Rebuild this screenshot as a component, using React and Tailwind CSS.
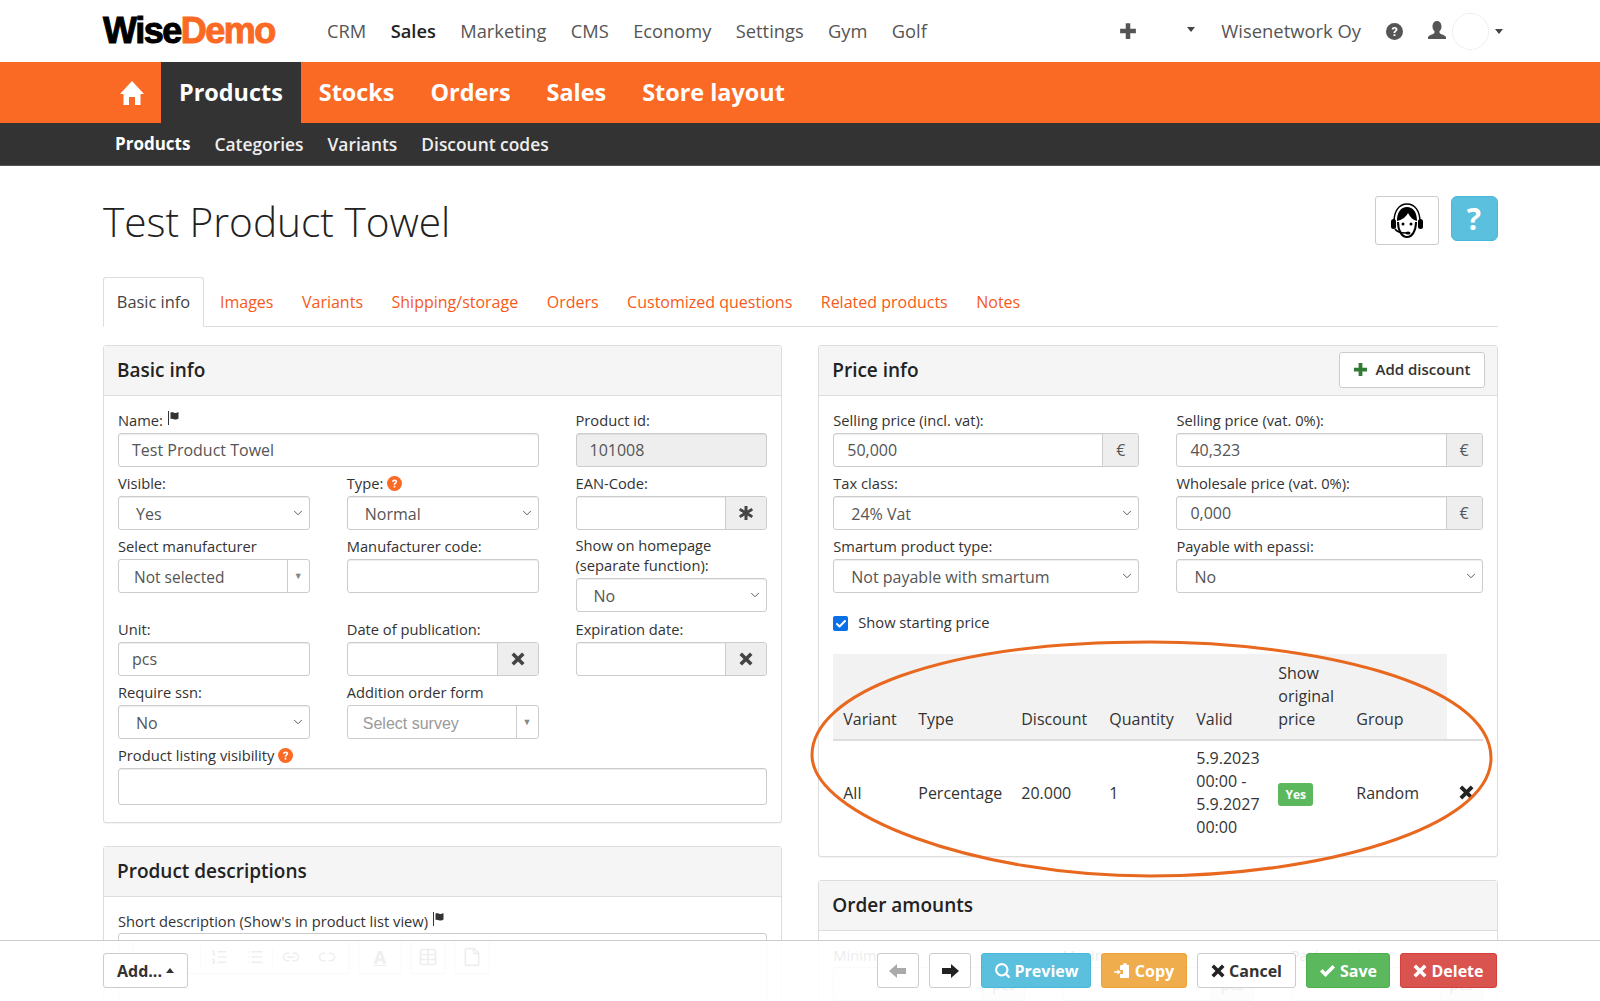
import { ChevronDown, Check, Search, ListOrdered, List, Link2, Unlink2, Table, File } from 'lucide-react';

const OPEN_SANS = "font-['Open_Sans',sans-serif]";

function Cross({ size = 14, className = 'text-[#444]' }) {
  return (
    <svg width={size} height={size} viewBox="0 0 14 14" className={className}>
      <path d="M3 .5 7 4.500 11 .5 13.500 3l-4 4 4 4-2.500 2.500-4-4-4 4L.5 11l4-4-4-4z" fill="currentColor" />
    </svg>
  );
}

function Plus({ size = 16, className = '' }) {
  return (
    <svg width={size} height={size} viewBox="0 0 16 16" className={className}>
      <path d="M6 1h4v5h5v4h-5v5H6v-5H1V6h5z" fill="currentColor" />
    </svg>
  );
}

function Help({ className = 'text-[#fb6a25]', size = 15 }) {
  return (
    <svg width={size} height={size} viewBox="0 0 14 14" className={className}>
      <circle cx="7" cy="7" r="7" fill="currentColor" />
      <path d="M4.600 5.200C4.800 3.900 5.800 3.200 7.100 3.200c1.400 0 2.400.8 2.400 2 0 1-.6 1.500-1.300 2-.4.3-.5.5-.5 1H6.200c0-1 .3-1.400 1-1.900.5-.3.7-.6.7-1 0-.4-.3-.7-.8-.7s-.8.3-.9.9zM6.200 9.200h1.600v1.600H6.200z" fill="#fff" />
    </svg>
  );
}

function Flag() {
  return (
    <svg width="14" height="14" viewBox="0 0 14 14" className="inline-block text-[#333] align-[1px]">
      <path d="M1 0h1v14H1z" fill="currentColor" />
      <path d="M3.500 1.500c2-1 3.500.6 5.500.4 1-.1 2-.5 2.500-.9v6.500c-.8.7-1.700 1-2.700 1-2 0-3.300-1.400-5.300-.5z" fill="currentColor" />
    </svg>
  );
}

function Field({ label, children, className = '' }) {
  return (
    <div className={className}>
      <div className="text-[14.7px] leading-[19px] text-[#333] mb-[3px] whitespace-nowrap">{label}</div>
      {children}
    </div>
  );
}

function Input({ value, disabled, h = 'h-[34px]' }) {
  return (
    <div className={`${h} rounded-[3px] border border-[#ccc] shadow-[inset_0_1px_1px_rgba(0,0,0,0.075)] px-[13px] text-[16px] leading-[32px] text-[#555] ${disabled ? 'bg-[#eee]' : 'bg-white'}`}>
      {value}
    </div>
  );
}

function Select({ value }) {
  return (
    <div className="h-[34px] rounded-[3px] border border-[#ccc] shadow-[inset_0_1px_1px_rgba(0,0,0,0.075)] bg-white pl-[17px] pr-[4px] flex items-center justify-between text-[16px] text-[#555]">
      <span className="pt-[1px]">{value}</span>
      <ChevronDown size={14} strokeWidth={1.5} className="text-[#444]" />
    </div>
  );
}

function Combo({ value, muted }) {
  return (
    <div className="h-[34px] rounded-[3px] border border-[#ccc] bg-white flex items-center">
      <span className={muted ? "flex-1 pl-[15px] pt-[3px] text-[16px] text-[#999] font-['Liberation_Sans',sans-serif]" : 'flex-1 pl-[15px] pt-[4px] text-[15.5px] text-[#555]'}>
        {value}
      </span>
      <span className="w-[22px] h-full border-l border-[#ccc] flex items-center justify-center text-[9px] text-[#888]">▼</span>
    </div>
  );
}

function Addon({ value, children, w = 'w-[41px]' }) {
  return (
    <div className="h-[34px] flex rounded-[3px] border border-[#ccc] shadow-[inset_0_1px_1px_rgba(0,0,0,0.075)] bg-white overflow-hidden">
      <div className="flex-1 px-[13px] text-[16px] leading-[32px] text-[#555]">{value}</div>
      <div className={`${w} bg-[#eee] border-l border-[#ccc] flex items-center justify-center text-[#555] text-[16px]`}>{children}</div>
    </div>
  );
}

function Panel({ title, action, children }) {
  return (
    <section className="border border-[#ddd] rounded-[3px] shadow-[0_1px_1px_rgba(0,0,0,0.05)] bg-white">
      <div className="h-[50px] bg-[#f5f5f5] border-b border-[#ddd] px-[13px] flex items-center justify-between">
        <h3 className="text-[19px] font-semibold text-[#222]">{title}</h3>
        {action}
      </div>
      {children}
    </section>
  );
}

function BasicInfo() {
  return (
    <Panel title="Basic info">
      <div className="px-[14px] pt-[15px] h-[426px]">
        <div className="grid grid-cols-3 gap-x-[37px]">
          <div className="col-span-2">
            <Field label={<>Name: <Flag /></>}><Input value="Test Product Towel" /></Field>
          </div>
          <Field label="Product id:"><Input value="101008" disabled /></Field>
        </div>
        <div className="grid grid-cols-3 gap-x-[37px] mt-[7px]">
          <Field label="Visible:"><Select value="Yes" /></Field>
          <Field label={<span className="flex items-center gap-[4px]">Type: <Help /></span>}><Select value="Normal" /></Field>
          <Field label="EAN-Code:">
            <Addon>
              <svg width="14" height="14" viewBox="0 0 14 14">
                <path d="M6 0h2v5.200l4.500-2.600 1 1.700L9 7l4.500 2.700-1 1.700L8 8.800V14H6V8.800l-4.500 2.600-1-1.700L5 7 .5 4.300l1-1.700L6 5.200z" fill="#444" stroke="#444" />
              </svg>
            </Addon>
          </Field>
        </div>
        <div className="grid grid-cols-3 gap-x-[37px] mt-[7px] h-[76px]">
          <Field label="Select manufacturer"><Combo value="Not selected" /></Field>
          <Field label="Manufacturer code:"><Input /></Field>
          <div className="-mt-[2px]">
            <div className="text-[14.7px] leading-[20px] text-[#333] mb-[3px]">Show on homepage<br />(separate function):</div>
            <Select value="No" />
          </div>
        </div>
        <div className="grid grid-cols-3 gap-x-[37px] mt-[7px]">
          <Field label="Unit:"><Input value="pcs" /></Field>
          <Field label="Date of publication:"><Addon><Cross /></Addon></Field>
          <Field label="Expiration date:"><Addon><Cross /></Addon></Field>
        </div>
        <div className="grid grid-cols-3 gap-x-[37px] mt-[7px]">
          <Field label="Require ssn:"><Select value="No" /></Field>
          <Field label="Addition order form"><Combo value="Select survey" muted /></Field>
        </div>
        <Field className="mt-[7px]" label={<span className="flex items-center gap-[4px]">Product listing visibility <Help /></span>}>
          <Input h="h-[37px]" />
        </Field>
      </div>
    </Panel>
  );
}

function Toolbar() {
  const cell = 'w-[36px] flex items-center justify-center';
  return (
    <div className="flex gap-[8px] h-[34px] mt-[6px] ml-[13px] text-[#555]">
      <div className="w-[218px] border border-[#ccc] rounded-[3px] flex items-center text-[15px] font-bold">
        <span className="w-[34px] text-center">B</span>
        <span className="w-[34px] text-center italic border-r border-[#ccc]">I</span>
        <span className={cell}><ListOrdered size={18} /></span>
        <span className={`${cell} border-r border-[#ccc]`}><List size={18} /></span>
        <span className={cell}><Link2 size={18} /></span>
        <span className={cell}><Unlink2 size={18} /></span>
      </div>
      <div className="w-[44px] border border-[#ccc] rounded-[3px] flex items-center justify-center font-bold text-[18px] underline">A</div>
      <div className="w-[36px] border border-[#ccc] rounded-[3px] flex items-center justify-center"><Table size={20} /></div>
      <div className="w-[36px] border border-[#ccc] rounded-[3px] flex items-center justify-center"><File size={20} /></div>
    </div>
  );
}

function PriceInfo() {
  const head = 'px-[10px] py-[8px] align-bottom text-left font-medium text-[#333] bg-[#f2f2f2]';
  const cell = 'px-[10px] py-[6px]';
  return (
    <Panel
      title="Price info"
      action={
        <button className="h-[36px] w-[146px] -mr-[1px] -mt-[2px] bg-white border border-[#ccc] rounded-[3px] flex items-center justify-center gap-[8px] text-[15px] font-semibold text-[#333]">
          <Plus size={15} className="text-[#2f7a35]" />
          Add discount
        </button>
      }
    >
      <div className="px-[14px] pt-[15px] h-[460px]">
        <div className="grid grid-cols-2 gap-x-[37px] gap-y-[7px]">
          <Field label="Selling price (incl. vat):"><Addon value="50,000" w="w-[36px]">€</Addon></Field>
          <Field label="Selling price (vat. 0%):"><Addon value="40,323" w="w-[36px]">€</Addon></Field>
          <Field label="Tax class:"><Select value="24% Vat" /></Field>
          <Field label="Wholesale price (vat. 0%):"><Addon value="0,000" w="w-[36px]">€</Addon></Field>
          <Field label="Smartum product type:"><Select value="Not payable with smartum" /></Field>
          <Field label="Payable with epassi:"><Select value="No" /></Field>
        </div>
        <label className="flex items-center gap-[10px] mt-[19px] text-[14.7px] text-[#333] leading-[20px]">
          <span className="w-[15px] h-[15px] rounded-[2px] bg-[#0b6fe8] flex items-center justify-center mt-[3px]">
            <Check size={12} strokeWidth={4} className="text-white" />
          </span>
          Show starting price
        </label>
        <table className="mt-[22px] w-[650px] table-fixed text-[16px] leading-[23px] border-collapse">
          <thead>
            <tr className="border-b-2 border-[#ddd]">
              <th className={`${head} w-[75px]`}>Variant</th>
              <th className={`${head} w-[103px]`}>Type</th>
              <th className={`${head} w-[88px]`}>Discount</th>
              <th className={`${head} w-[87px]`}>Quantity</th>
              <th className={`${head} w-[82px]`}>Valid</th>
              <th className={`${head} w-[78px]`}>Show original price</th>
              <th className={`${head} w-[101px]`}>Group</th>
              <th></th>
            </tr>
          </thead>
          <tbody>
            <tr className="text-[#333]">
              <td className={cell}>All</td>
              <td className={cell}>Percentage</td>
              <td className={cell}>20.000</td>
              <td className={cell}>1</td>
              <td className={cell}>5.9.2023 00:00 - 5.9.2027 00:00</td>
              <td className={cell}>
                <span className="block w-[35px] h-[23px] mt-[2px] rounded-[3px] bg-[#5cb85c] text-white text-[12px] font-bold text-center leading-[23px]">Yes</span>
              </td>
              <td className={cell}>Random</td>
              <td className="pl-[12px]"><Cross size={15} className="text-[#222] -mt-[2px]" /></td>
            </tr>
          </tbody>
        </table>
      </div>
    </Panel>
  );
}

function OrderAmounts() {
  return (
    <Panel title="Order amounts">
      <div className="px-[14px] pt-[14px] grid grid-cols-3 gap-x-[37px] text-[14.7px] text-[#333]">
        {['Minimum:', 'Maximum:', 'Package size:'].map((label) => (
          <div key={label}>
            <div className="leading-[20px] mb-[2px]">{label}</div>
            <div className="h-[34px] border border-[#ccc] rounded-[3px] flex justify-end">
              <span className="w-[42px] bg-[#eee] border-l border-[#ccc] text-center leading-[32px]">pcs</span>
            </div>
          </div>
        ))}
      </div>
    </Panel>
  );
}

function ActionButton({ className, children }) {
  return (
    <button className={`h-[35px] rounded-[3px] border flex items-center justify-center gap-[4px] text-[16px] font-bold ${className}`}>
      {children}
    </button>
  );
}

export default function App() {
  const mainNav = ['CRM', 'Sales', 'Marketing', 'CMS', 'Economy', 'Settings', 'Gym', 'Golf'];
  const tabs = ['Images', 'Variants', 'Shipping/storage', 'Orders', 'Customized questions', 'Related products', 'Notes'];

  return (
    <div className={`relative h-[1001px] overflow-hidden bg-white ${OPEN_SANS}`}>
      {/* Top bar */}
      <header className="h-[62px] px-[103px] flex items-center">
        <div className="w-[224px] text-[36px] leading-none tracking-[-1.5px] font-['Liberation_Sans',sans-serif] font-bold [-webkit-text-stroke:1px_currentColor]">
          <span className="text-black">Wise</span><span className="text-[#fb6a25]">Demo</span>
        </div>
        <nav className="flex gap-[24.4px] text-[18.3px] text-[#555]">
          {mainNav.map((item) => (
            <a key={item} className={item === 'Sales' ? 'text-[#222] font-semibold' : ''}>{item}</a>
          ))}
        </nav>
        <div className="ml-auto -mr-[6px] flex items-center text-[#555]">
          <Plus size={18} />
          <span className="ml-[50px] w-0 h-0 border-x-[4px] border-x-transparent border-t-[5px] border-t-[#444] -mt-[4px]" />
          <span className="ml-[26px] text-[18.4px]">Wisenetwork Oy</span>
          <Help className="text-[#555] ml-[25px]" size={17} />
          <svg width="20" height="20" viewBox="0 0 20 20" className="ml-[24px] text-[#555]">
            <path d="M10 0c3 0 4.500 2.500 4.500 5.500 0 2-.8 3.500-2 4.800-.3 1.500.3 2.300 2 3 2 .8 4 1.500 4.500 2.700v2H1v-2c.5-1.200 2.500-1.900 4.500-2.700 1.700-.7 2.300-1.500 2-3-1.200-1.300-2-2.800-2-4.800C5.500 2.500 7 0 10 0z" fill="currentColor" />
          </svg>
          <span className="ml-[5px] w-[37px] h-[37px] rounded-full border border-dotted border-[#ddd]" />
          <span className="ml-[6px] w-0 h-0 border-x-[4px] border-x-transparent border-t-[5px] border-t-[#444]" />
        </div>
      </header>

      {/* Orange nav */}
      <div className="h-[61px] bg-[#fb6a25] pl-[103px] flex text-white text-[23.4px] font-bold">
        <div className="w-[58px] flex items-center justify-center">
          <svg width="26" height="26" viewBox="0 0 26 26">
            <path d="M13 1 25 14h-3.500v11h-5.500v-8h-6v8H4.500V14H1z" fill="#fff" />
          </svg>
        </div>
        <div className="px-[18px] bg-[#333] flex items-center">Products</div>
        {['Stocks', 'Orders', 'Sales', 'Store layout'].map((item) => (
          <div key={item} className="px-[18px] flex items-center">{item}</div>
        ))}
      </div>

      {/* Sub nav */}
      <div className="h-[43px] bg-[#333] border-b border-[#555] pl-[115px] flex items-center gap-[24px] text-[#eee] text-[17.4px] font-semibold">
        <a className="text-white font-bold text-[17px]">Products</a>
        <a>Categories</a>
        <a>Variants</a>
        <a>Discount codes</a>
      </div>

      <main className="pl-[103px] pr-[102.5px]">
        <div className="h-[111px] flex justify-between">
          <h1 className="mt-[26px] text-[40.6px] leading-[60px] font-light text-[#222]">Test Product Towel</h1>
          <div className="flex gap-[12px] mt-[30px] items-start">
            <div className="w-[64px] h-[49px] border border-[#ccc] rounded-[3px] flex items-center justify-center">
              <svg width="38" height="38" viewBox="0 0 38 38">
                <path d="M6 20C6 9 11 2 19 2s13 7 13 18" fill="none" stroke="#000" strokeWidth="1.500" />
                <path d="M9 19C9 10 13 5 19 5s10 5 10 14c-4-1-7-4-9-8-2 4-6 7-11 8z" fill="#000" />
                <rect x="3" y="17" width="5" height="10" rx="2.500" fill="#000" />
                <rect x="30" y="17" width="5" height="10" rx="2.500" fill="#000" />
                <path d="M10 20c0 9 4 15 9 15s9-6 9-15" fill="none" stroke="#000" strokeWidth="2" />
                <circle cx="15" cy="22" r="1.500" fill="#000" />
                <circle cx="23" cy="22" r="1.500" fill="#000" />
                <path d="M7 27c2 3 6 4 11 4" fill="none" stroke="#000" strokeWidth="1.500" />
                <ellipse cx="20" cy="31" rx="2.500" ry="1.500" fill="#000" />
              </svg>
            </div>
            <div className="w-[47px] h-[45px] bg-[#5bc0de] border border-[#46b8da] rounded-[6px] flex items-center justify-center text-white text-[30px] font-bold">?</div>
          </div>
        </div>

        {/* Tabs */}
        <div className="h-[50px] flex border-b border-[#ddd] text-[16px] pl-[0px]">
          <div className="w-[101px] h-[50px] bg-white border border-[#ddd] border-b-white rounded-t-[3px] flex items-center justify-center text-[16.4px] text-[#444]">Basic info</div>
          {tabs.map((tab) => (
            <a key={tab} className="ml-[16px] pr-[14px] flex items-center text-[#f55a1a] [&:not(:nth-child(2))]:ml-[14.5px]">{tab}</a>
          ))}
        </div>

        <div className="grid grid-cols-2 gap-x-[36px] mt-[18px] items-start">
          <div className="flex flex-col gap-[23px]">
            <BasicInfo />
            <Panel title="Product descriptions">
              <div className="px-[14px] pt-[14px]">
                <div className="text-[14.7px] leading-[20px] text-[#333] mb-[2px]">Short description (Show's in product list view) <Flag /></div>
                <div className="h-[120px] border border-[#ccc] rounded-[3px]">
                  <Toolbar />
                </div>
              </div>
            </Panel>
          </div>
          <div className="flex flex-col gap-[23px]">
            <PriceInfo />
            <OrderAmounts />
          </div>
        </div>
      </main>

      {/* Annotation drawn on the screenshot */}
      <svg width="700" height="250" viewBox="0 0 700 250" className="absolute left-[805px] top-[635px] pointer-events-none">
        <path d="M7 120C7 60 130 7 345 7c160 0 341 40 341 116 0 70-170 118-341 118C170 241 7 180 7 120z" fill="none" stroke="#e8681f" strokeWidth="3" />
      </svg>

      {/* Fixed action bar */}
      <footer className="absolute left-0 right-0 top-[940px] h-[61px] bg-white/90 border-t border-[#ccc] pl-[103px] pr-[103px] pt-[12px] flex">
        <button className="h-[35px] w-[85px] bg-white border border-[#ccc] rounded-[3px] flex items-center justify-center gap-[4px] text-[16px] font-bold text-[#333]">
          Add...
          <span className="w-0 h-0 border-x-[4px] border-x-transparent border-b-[5px] border-b-[#333]" />
        </button>
        <div className="ml-auto flex gap-[10px]">
          <ActionButton className="w-[42px] bg-white border-[#ccc] text-[#aaa]">
            <svg width="18" height="14" viewBox="0 0 18 14"><path d="M8 0v4h9v6H8v4L0 7z" fill="currentColor" /></svg>
          </ActionButton>
          <ActionButton className="w-[42px] bg-white border-[#ccc] text-[#222]">
            <svg width="18" height="14" viewBox="0 0 18 14"><path d="M10 0v4H1v6h9v4l8-7z" fill="currentColor" /></svg>
          </ActionButton>
          <ActionButton className="w-[110px] bg-[#5bc0de] border-[#46b8da] text-white">
            <Search size={17} strokeWidth={3} />
            Preview
          </ActionButton>
          <ActionButton className="w-[86px] bg-[#f0ad4e] border-[#eea236] text-white">
            <svg width="17" height="17" viewBox="0 0 17 17">
              <path d="M7 3h2a2 2 0 0 1 4 0h2v13H6v-4h3V8H6V4z" fill="#fff" />
              <path d="M0 9.200h3.500V7.500L7 10l-3.500 2.500v-1.700H0z" fill="#fff" />
            </svg>
            Copy
          </ActionButton>
          <ActionButton className="w-[99px] bg-white border-[#ccc] text-[#333]">
            <Cross size={14} className="text-[#222]" />
            Cancel
          </ActionButton>
          <ActionButton className="w-[84px] bg-[#5cb85c] border-[#4cae4c] text-white">
            <svg width="17" height="14" viewBox="0 0 17 14"><path d="M1 7.500 3.500 5l3 3L13.500 1 16 3.500 6.500 13z" fill="#fff" /></svg>
            Save
          </ActionButton>
          <ActionButton className="w-[97px] bg-[#d9534f] border-[#d43f3a] text-white">
            <Cross size={14} className="text-white" />
            Delete
          </ActionButton>
        </div>
      </footer>
    </div>
  );
}
